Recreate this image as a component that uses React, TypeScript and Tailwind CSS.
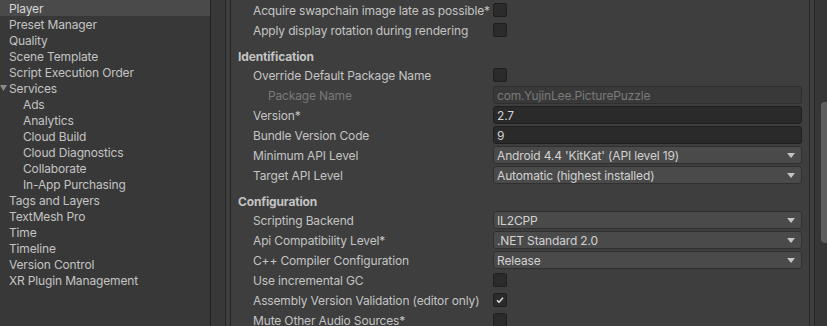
import React from "react";

const sideItems: { label: string; indent?: boolean; selected?: boolean; fold?: boolean }[] = [
  { label: "Player", selected: true },
  { label: "Preset Manager" },
  { label: "Quality" },
  { label: "Scene Template" },
  { label: "Script Execution Order" },
  { label: "Services", fold: true },
  { label: "Ads", indent: true },
  { label: "Analytics", indent: true },
  { label: "Cloud Build", indent: true },
  { label: "Cloud Diagnostics", indent: true },
  { label: "Collaborate", indent: true },
  { label: "In-App Purchasing", indent: true },
  { label: "Tags and Layers" },
  { label: "TextMesh Pro" },
  { label: "Time" },
  { label: "Timeline" },
  { label: "Version Control" },
  { label: "XR Plugin Management" },
];

type Row =
  | { kind: "header"; label: string }
  | { kind: "check"; label: string; checked?: boolean }
  | { kind: "text"; label: string; value: string; disabled?: boolean }
  | { kind: "drop"; label: string; value: string };

const rows: Row[] = [
  { kind: "check", label: "Acquire swapchain image late as possible*" },
  { kind: "check", label: "Apply display rotation during rendering" },
  { kind: "header", label: "Identification" },
  { kind: "check", label: "Override Default Package Name" },
  { kind: "text", label: "Package Name", value: "com.YujinLee.PicturePuzzle", disabled: true },
  { kind: "text", label: "Version*", value: "2.7" },
  { kind: "text", label: "Bundle Version Code", value: "9" },
  { kind: "drop", label: "Minimum API Level", value: "Android 4.4 'KitKat' (API level 19)" },
  { kind: "drop", label: "Target API Level", value: "Automatic (highest installed)" },
  { kind: "header", label: "Configuration" },
  { kind: "drop", label: "Scripting Backend", value: "IL2CPP" },
  { kind: "drop", label: "Api Compatibility Level*", value: ".NET Standard 2.0" },
  { kind: "drop", label: "C++ Compiler Configuration", value: "Release" },
  { kind: "check", label: "Use incremental GC" },
  { kind: "check", label: "Assembly Version Validation (editor only)", checked: true },
  { kind: "check", label: "Mute Other Audio Sources*" },
];

function Checkbox({ checked }: { checked?: boolean }) {
  return (
    <div className="w-[14px] h-[14px] rounded-[2px] bg-[#2b2b2b] border border-[#1f1f1f] flex items-center justify-center">
      {checked && (
        <svg width="10" height="10" viewBox="0 0 10 10">
          <path d="M2 5.2 L4 7.2 L8 2.8" fill="none" stroke="#e6e6e6" strokeWidth="1.4" />
        </svg>
      )}
    </div>
  );
}

function RowView({ row }: { row: Row }) {
  if (row.kind === "header") {
    return (
      <div className="h-[25px] shrink-0 pt-[9px] pl-[7px]">
        <div className="h-[16px] leading-[16px] font-bold text-[#c4c4c4]">{row.label}</div>
      </div>
    );
  }
  const disabled = row.kind === "text" && row.disabled;
  return (
    <div className="h-[20px] shrink-0 flex items-center">
      <div
        className={
          "w-[262px] shrink-0 whitespace-nowrap pt-[2px] leading-[16px] " +
          (disabled ? "pl-[37px] text-[#7a7a7a]" : "pl-[22px] text-[#c4c4c4]")
        }
      >
        {row.label}
      </div>
      {row.kind === "check" && <Checkbox checked={row.checked} />}
      {row.kind === "text" && (
        <div
          className={
            "w-[309px] h-[18px] rounded-[3px] border px-[3px] pt-[1px] leading-[15px] " +
            (row.disabled
              ? "bg-[#393939] border-[#2f2f2f] text-[#7a7a7a]"
              : "bg-[#2a2a2a] border-[#1f1f1f] text-[#d2d2d2]")
          }
        >
          {row.value}
        </div>
      )}
      {row.kind === "drop" && (
        <div className="w-[309px] h-[18px] rounded-[3px] border border-[#303030] bg-[#4a4a4a] pl-[3px] pr-[6px] flex items-center justify-between text-[#d2d2d2]">
          <span className="leading-[16px] pt-[2px]">{row.value}</span>
          <svg width="8" height="5" viewBox="0 0 8 5">
            <path d="M0 0 L8 0 L4 5 Z" fill="#c4c4c4" />
          </svg>
        </div>
      )}
    </div>
  );
}

export default function App() {
  return (
    <div
      className="w-[827px] h-[326px] overflow-hidden flex text-[12px] tracking-[-0.15px] bg-[#3e3e3e]"
      style={{ fontFamily: "Inter, 'Noto Sans', sans-serif" }}
    >
      {/* Sidebar */}
      <div className="w-[210px] shrink-0 bg-[#383838] flex flex-col">
        {sideItems.map((it) => (
          <div
            key={it.label}
            className={
              "h-[16px] shrink-0 leading-[16px] pt-[1px] relative " +
              (it.selected ? "bg-[#4a4a4a] text-[#d8d8d8] " : "text-[#c4c4c4] ") +
              (it.indent ? "pl-[23px]" : "pl-[9px]")
            }
          >
            {it.fold && (
              <svg className="absolute left-[0px] top-[5px]" width="7" height="7" viewBox="0 0 7 7">
                <path d="M0 0 L7 0 L3.5 6 Z" fill="#8a8a8a" />
              </svg>
            )}
            {it.label}
          </div>
        ))}
      </div>
      <div className="w-[1px] shrink-0 bg-[#232323]" />
      <div className="w-[14px] shrink-0 bg-[#383838]" />
      <div className="w-[1px] shrink-0 bg-[#262626]" />
      <div className="w-[4px] shrink-0 bg-[#3e3e3e]" />
      <div className="w-[1px] shrink-0 bg-[#262626]" />
      {/* Content */}
      <div className="w-[578px] shrink-0 flex flex-col">
        {rows.map((r, i) => (
          <RowView key={i} row={r} />
        ))}
      </div>
      <div className="w-[1px] shrink-0 bg-[#262626]" />
      <div className="w-[4px] shrink-0 bg-[#3e3e3e]" />
      <div className="w-[1px] shrink-0 bg-[#262626]" />
      {/* Scrollbar */}
      <div className="flex-1 bg-[#363636] pt-[102px] pl-[6px]">
        <div className="h-[141px] bg-[#5e5e5e] rounded-l-[4px]" />
      </div>
    </div>
  );
}
